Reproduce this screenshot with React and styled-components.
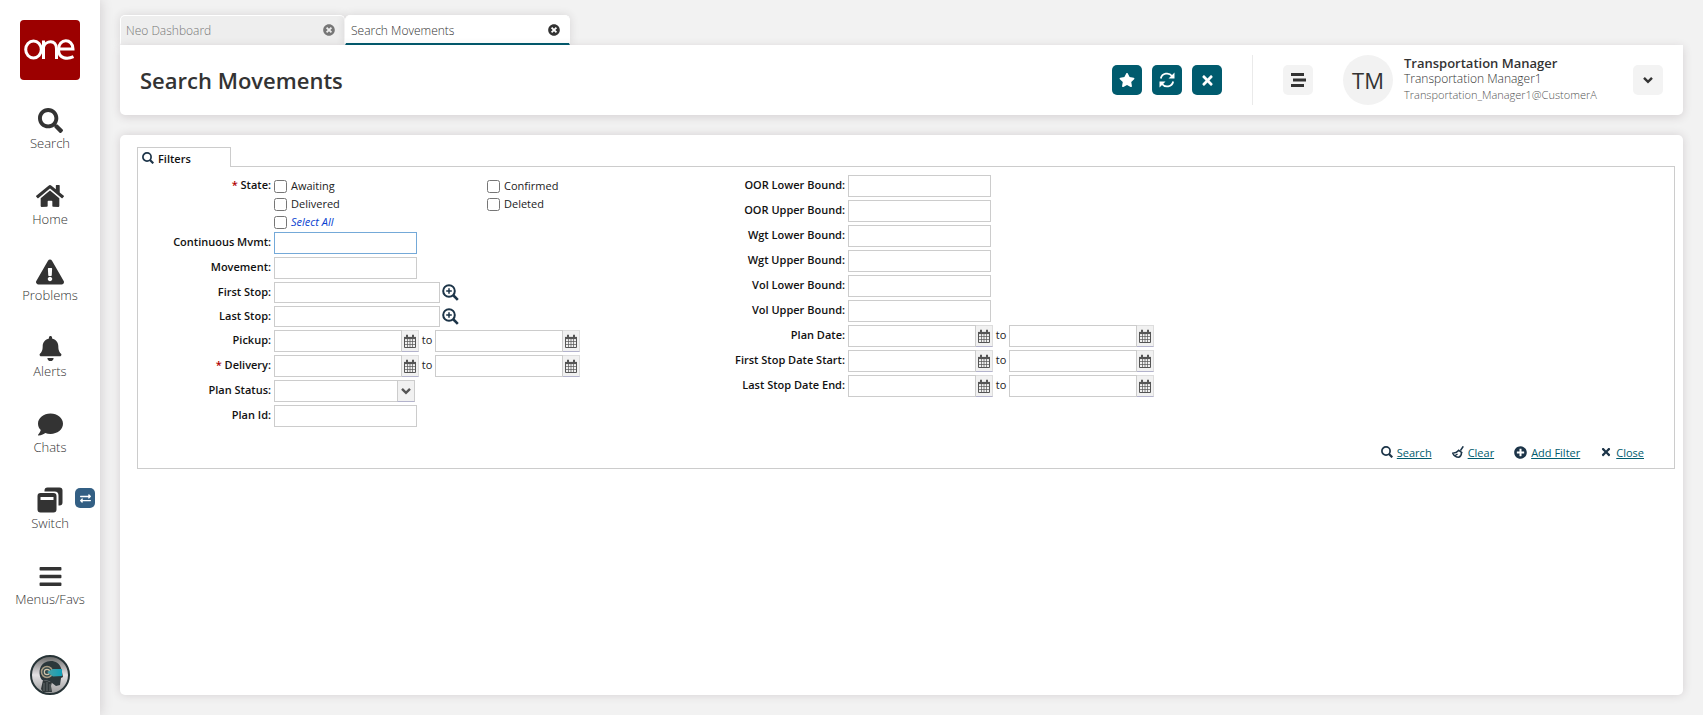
import React, { useState } from 'react'
import styled, { createGlobalStyle } from 'styled-components'
import {
  FaSearch,
  FaHome,
  FaExclamationTriangle,
  FaBell,
  FaComment,
  FaBars,
  FaStar,
  FaTimes,
  FaTimesCircle,
  FaPlusCircle,
  FaExchangeAlt,
} from 'react-icons/fa'

const GlobalStyles = createGlobalStyle`
  * {
    box-sizing: border-box;
  }
  body {
    margin: 0;
    background: #f2f2f2;
    color: #333;
    font-family: 'Open Sans', 'Noto Sans', sans-serif;
    font-size: 11px;
  }
  button, input, select {
    font-family: inherit;
    font-size: inherit;
    color: inherit;
  }
`

const Page = styled.div`
  display: flex;
  min-height: 100vh;
`

const Sidebar = styled.nav`
  display: flex;
  flex-direction: column;
  align-items: center;
  flex: none;
  width: 100px;
  padding: 20px 0;
  background: #fff;
  box-shadow: 0 0 12px rgba(60, 40, 50, 0.2);
`

const NavList = styled.div`
  display: flex;
  flex-direction: column;
  flex: 1;
  width: 100%;
  padding-top: 26px;
  gap: 28px;
`

const NavItem = styled.button`
  position: relative;
  display: flex;
  flex-direction: column;
  align-items: center;
  justify-content: flex-start;
  height: 48px;
  padding: 0;
  border: 0;
  background: none;
  font-size: 13px;
  font-weight: 300;
  line-height: 18px;
  cursor: pointer;
`

const NavIcon = styled.span`
  display: flex;
  align-items: center;
  justify-content: center;
  height: 28px;
`

const SwitchBadge = styled.span`
  position: absolute;
  top: 2px;
  right: 5px;
  display: flex;
  align-items: center;
  justify-content: center;
  width: 20px;
  height: 20px;
  border-radius: 5px;
  background: #335f84;
  color: #fff;
`

const Assistant = styled.button`
  display: flex;
  padding: 0;
  border: 0;
  background: none;
  cursor: pointer;
`

const Main = styled.main`
  display: flex;
  flex-direction: column;
  flex: 1;
  min-width: 0;
  padding: 15px 20px 20px;
`

const Tabs = styled.div`
  display: flex;
`

const Tab = styled.div`
  display: flex;
  align-items: center;
  justify-content: space-between;
  width: 225px;
  height: 30px;
  padding: 0 9px 0 5px;
  border-radius: 5px 5px 0 0;
  border: 1px solid #fff;
  border-bottom: 2px solid ${(p) => (p.$active ? '#005b6e' : '#eee')};
  background: ${(p) => (p.$active ? '#fff' : '#eee')};
  color: ${(p) => (p.$active ? '#333' : '#777')};
  box-shadow: 0 0 10px rgba(60, 40, 50, 0.14);
`

const TabButton = styled.button`
  padding: 2px 0 0;
  border: 0;
  background: none;
  font-size: 12px;
  font-weight: 300;
  cursor: pointer;
`

const TabClose = styled.button`
  display: flex;
  padding: 0;
  border: 0;
  background: none;
  cursor: pointer;
`

const Header = styled.header`
  position: relative;
  display: flex;
  align-items: center;
  height: 70px;
  padding: 0 20px;
  border-radius: 0 0 5px 5px;
  background: #fff;
  box-shadow: 0 2px 10px rgba(60, 40, 50, 0.16);
`

const Title = styled.h1`
  flex: 1;
  margin: 0;
  font-size: 22px;
  font-weight: 600;
`

const Actions = styled.div`
  display: flex;
  align-items: center;
  gap: 10px;
  height: 50px;
  padding-right: 30px;
  border-right: 1px solid #eaeaea;
`

const SquareButton = styled.button`
  display: flex;
  align-items: center;
  justify-content: center;
  width: 30px;
  height: 30px;
  padding: 0;
  border: 0;
  border-radius: 5px;
  background: ${(p) => (p.$primary ? '#005b6e' : '#f3f3f3')};
  color: ${(p) => (p.$primary ? '#fff' : '#333')};
  cursor: pointer;
`

const UserArea = styled.div`
  display: flex;
  align-items: center;
  padding-left: 30px;
`

const Initials = styled.div`
  display: flex;
  align-items: center;
  justify-content: center;
  width: 50px;
  height: 50px;
  margin: 0 11px 0 30px;
  border-radius: 50%;
  background: #f2f2f2;
  font-size: 22px;
`

const UserText = styled.div`
  display: flex;
  flex-direction: column;
  width: 229px;
  padding-bottom: 3px;
  font-size: 12px;
  font-weight: 300;
  line-height: 16px;
`

const UserName = styled.strong`
  font-size: 13px;
  font-weight: 600;
`

const UserLogin = styled.span`
  color: #555;
  font-size: 11px;
`

const Panel = styled.section`
  flex: 1;
  margin-top: 20px;
  padding: 12px 8px 20px 17px;
  border-radius: 5px;
  background: #fff;
  box-shadow: 0 0 10px rgba(60, 40, 50, 0.16);
`

/* sits over the top border of the filter box so the tab looks open */
const FiltersTab = styled.button`
  position: relative;
  display: flex;
  align-items: center;
  gap: 4px;
  width: 94px;
  height: 20px;
  margin-bottom: -1px;
  padding: 1px 4px 0;
  border: 1px solid #ccc;
  border-bottom: 0;
  background: #fff;
  color: #111;
  font-weight: 600;
`

const Filters = styled.form`
  border: 1px solid #ccc;
`

const Columns = styled.div`
  display: grid;
  grid-template-columns: 574px 1fr;
  min-height: 272px;
  padding-top: 8px;
`

const Column = styled.div`
  display: flex;
  flex-direction: column;
  gap: 3px;
`

const FieldRow = styled.div`
  display: flex;
  align-items: flex-start;
  height: ${(p) => (p.$short ? '21px' : '22px')};
`

const Label = styled.label`
  flex: none;
  width: 136px;
  padding-right: 3px;
  color: #111;
  font-weight: 600;
  line-height: 20px;
  text-align: right;
`

const Required = styled.span`
  color: #b00000;
`

const StateRow = styled.div`
  display: flex;
  align-items: flex-start;
`

const StateGrid = styled.div`
  display: grid;
  grid-template-columns: 213px 213px;
  grid-auto-rows: 18px;
`

const CheckLabel = styled.label`
  display: flex;
  align-items: center;
  gap: 4px;
  padding-top: 4px;
  color: ${(p) => (p.$link ? '#0a3fd0' : '#222')};
  font-style: ${(p) => (p.$link ? 'italic' : 'normal')};
  line-height: 14px;
`

const Checkbox = styled.input`
  width: 13px;
  height: 13px;
  margin: 0;
`

const TextInput = styled.input`
  width: ${(p) => p.$width || 143}px;
  height: 100%;
  padding: 0 4px;
  border: 1px solid #ccc;
  border-radius: 0;
  background: #fff;
  outline: none;

  &:focus {
    border-color: #74a9d8;
  }
`

const LookupButton = styled.button`
  display: flex;
  margin-left: 2px;
  padding: 2px 0;
  border: 0;
  background: none;
  cursor: pointer;
`

const PickerButton = styled.button`
  display: flex;
  align-items: center;
  justify-content: center;
  width: 17px;
  height: 100%;
  padding: 0;
  border: 1px solid #ddd;
  border-left: 0;
  border-bottom-color: #b3b3cc;
  background: #f1f1f1;
  cursor: pointer;
`

const To = styled.span`
  width: 16px;
  color: #222;
  line-height: 20px;
  text-align: center;
`

const SelectBox = styled.div`
  display: grid;
  width: 141px;
  height: 100%;
`

const Select = styled.select`
  grid-area: 1 / 1;
  appearance: none;
  border: 1px solid #ccc;
  border-radius: 0;
  background: #fff;
  outline: none;
`

const SelectArrow = styled.span`
  grid-area: 1 / 1;
  justify-self: end;
  display: flex;
  align-items: center;
  justify-content: center;
  width: 18px;
  border: 1px solid #ccc;
  border-bottom-color: #b3b3cc;
  background: #f1f1f1;
  pointer-events: none;
`

const FilterActions = styled.div`
  display: flex;
  justify-content: flex-end;
  gap: 20px;
  padding: 5px 30px 8px 0;
`

const ActionLink = styled.a`
  display: flex;
  align-items: center;
  gap: 4px;
  height: 16px;
  color: #005b6e;
  text-decoration: none;

  span {
    text-decoration: underline;
  }
  svg {
    color: #1c3448;
  }
`

const Logo = () => (
  <svg width="60" height="60" viewBox="0 0 60 60" role="img" aria-label="one">
    <rect width="60" height="60" rx="4" fill="#9c0000" />
    <g fill="none" stroke="#fff" strokeWidth="3">
      <ellipse cx="13.5" cy="29.5" rx="7.8" ry="8.6" />
      <path d="M23.500 39V20.500M23.500 27c2-6.500 13-8 13 2v10" />
      <path d="M39.500 29h13.500c0-11-14.500-11-14.500.5 0 9.500 9 10 15 7.200" />
    </g>
  </svg>
)

const SwitchIcon = () => (
  <svg width="26" height="26" viewBox="0 0 26 26" fill="#333">
    <path d="M7.500 4.500V3.500a3 3 0 0 1 3-3h12a3 3 0 0 1 3 3v12a3 3 0 0 1-3 3h-1V8.500a4 4 0 0 0-4-4z" />
    <path
      fillRule="evenodd"
      d="M3.500 6h13a3 3 0 0 1 3 3v13.500a3 3 0 0 1-3 3h-13a3 3 0 0 1-3-3V9a3 3 0 0 1 3-3zm0 4v3h13v-3z"
    />
  </svg>
)

const RefreshIcon = () => (
  <svg width="16" height="16" viewBox="0 0 16 16" fill="none" stroke="currentColor" strokeWidth="1.800">
    <path d="M1.800 6.500C3 .8 10 .2 13 4M14.200 9.500C13 15.200 6 15.800 3 12" />
    <path d="M15.500.5V6.500H9.500zM.5 15.500V9.500H6.500z" fill="currentColor" stroke="none" />
  </svg>
)

const LinesIcon = () => (
  <svg width="16" height="14" viewBox="0 0 16 14" fill="#333">
    <path d="M1 0h13v3H1zM3 5.500h13v3H3zM1 11h13v3H1z" />
  </svg>
)

const Chevron = ({ size = 10, color = '#333' }) => (
  <svg width={size} height={size} viewBox="0 0 10 10" fill="none" stroke={color} strokeWidth="2.400">
    <path d="M1 2.800 5 6.800l4-4" />
  </svg>
)

const CalendarIcon = () => (
  <svg width="12" height="14" viewBox="0 0 12 14" fill="none" stroke="#555">
    <path d="M.5 3.500v10h11v-10z" strokeWidth="1" />
    <path d="M.5 7.500h11M.5 10.500h11M3.500 5v8.500M6 5v8.500M8.500 5v8.500" strokeWidth=".7" />
    <path d="M0 4h12" strokeWidth="2.200" />
    <path d="M3 .8v3M9 .8v3" strokeWidth="2" />
  </svg>
)

const ZoomIcon = () => (
  <svg width="17" height="17" viewBox="0 0 17 17" fill="none" stroke="#1c3448">
    <circle cx="7" cy="7" r="5.800" strokeWidth="2" />
    <path d="M7 4.200v5.600M4.200 7h5.600" strokeWidth="1.500" />
    <path d="m11 11 4.800 4.800" strokeWidth="2.600" />
  </svg>
)

const SearchIcon = () => (
  <svg width="12" height="12" viewBox="0 0 12 12" fill="none" stroke="#1c3448">
    <circle cx="5" cy="5" r="4.100" strokeWidth="1.700" />
    <path d="m8 8 3.300 3.300" strokeWidth="2.200" />
  </svg>
)

const BroomIcon = () => (
  <svg width="12" height="12" viewBox="0 0 12 12" fill="none" stroke="#1c3448" strokeWidth="1.500">
    <path d="M11.300.3 8.500 4.500M6 3.800l4.300 3M6.300 4.800C5 6.500 3 7.200.8 7.200c1 2.500 3 4 6 4 2-.8 2.700-2.500 2.700-4.500M3.300 9.500 5.500 8" />
  </svg>
)

const RobotAvatar = () => (
  <svg width="40" height="40" viewBox="0 0 40 40">
    <defs>
      <linearGradient id="robotBg" x1="0" y1="0" x2="0" y2="1">
        <stop offset="0" stopColor="#666" />
        <stop offset=".5" stopColor="#e4e2e4" />
        <stop offset="1" stopColor="#999" />
      </linearGradient>
      <linearGradient id="visor">
        <stop offset="0" stopColor="#4a9fa6" />
        <stop offset="1" stopColor="#109fb8" />
      </linearGradient>
    </defs>
    <circle cx="20" cy="20" r="19" fill="url(#robotBg)" stroke="#263336" strokeWidth="2" />
    <path
      d="M12 25C8 20 9 11 14 8c6-4 15-2 17 5l1 4 1 5-2 1-1 7-4 1-4-3-3-2z"
      fill="#2b373b"
    />
    <path d="M13 25l9 2-1 4 1 6h-9l-2-3z" fill="#30383a" />
    <circle cx="17" cy="17" r="5.500" fill="#33474a" stroke="#a89b83" strokeWidth="1.500" />
    <circle cx="17" cy="17" r="2.700" fill="none" stroke="#d0c5aa" strokeWidth="1.200" />
    <path d="M17 17l6-3h9v7l-9 .5z" fill="url(#visor)" />
    <path d="M14 28v8M17 27v9M20 29v7" stroke="#71797a" strokeWidth=".8" />
  </svg>
)

const navItems = [
  { label: 'Search', icon: <FaSearch size={25} /> },
  { label: 'Home', icon: <FaHome size={28} /> },
  { label: 'Problems', icon: <FaExclamationTriangle size={28} /> },
  { label: 'Alerts', icon: <FaBell size={25} /> },
  { label: 'Chats', icon: <FaComment size={25} /> },
  { label: 'Switch', icon: <SwitchIcon />, badge: true },
  { label: 'Menus/Favs', icon: <FaBars size={25} /> },
]

const leftFields = [
  { label: 'Continuous Mvmt', type: 'text', focus: true },
  { label: 'Movement', type: 'text' },
  { label: 'First Stop', type: 'lookup' },
  { label: 'Last Stop', type: 'lookup' },
  { label: 'Pickup', type: 'dates' },
  { label: 'Delivery', type: 'dates', required: true },
  { label: 'Plan Status', type: 'select' },
  { label: 'Plan Id', type: 'text' },
]

const rightFields = [
  { label: 'OOR Lower Bound', type: 'text' },
  { label: 'OOR Upper Bound', type: 'text' },
  { label: 'Wgt Lower Bound', type: 'text' },
  { label: 'Wgt Upper Bound', type: 'text' },
  { label: 'Vol Lower Bound', type: 'text' },
  { label: 'Vol Upper Bound', type: 'text' },
  { label: 'Plan Date', type: 'dates' },
  { label: 'First Stop Date Start', type: 'dates' },
  { label: 'Last Stop Date End', type: 'dates' },
]

const states = ['Awaiting', 'Confirmed', 'Delivered', 'Deleted']

const DateInput = ({ id, label }) => (
  <>
    <TextInput id={id} type="text" aria-label={label} $width={128} />
    <PickerButton type="button" aria-label="Open calendar">
      <CalendarIcon />
    </PickerButton>
  </>
)

function Field({ label, type, required, focus }) {
  const id = label.toLowerCase().replace(/ /g, '-')

  return (
    <FieldRow $short={type === 'lookup'}>
      <Label htmlFor={id}>
        {required && <Required>* </Required>}
        {label}:
      </Label>
      {type === 'text' && <TextInput id={id} type="text" autoFocus={focus} />}
      {type === 'lookup' && (
        <>
          <TextInput id={id} type="text" $width={166} />
          <LookupButton type="button" aria-label={`Find ${label}`}>
            <ZoomIcon />
          </LookupButton>
        </>
      )}
      {type === 'dates' && (
        <>
          <DateInput id={id} />
          <To>to</To>
          <DateInput id={`${id}-to`} label={`${label} to`} />
        </>
      )}
      {type === 'select' && (
        <SelectBox>
          <Select id={id}>
            <option></option>
          </Select>
          <SelectArrow>
            <Chevron color="#555" />
          </SelectArrow>
        </SelectBox>
      )}
    </FieldRow>
  )
}

function App() {
  const [checked, setChecked] = useState([])

  const toggleState = (state) => {
    setChecked(checked.includes(state) ? checked.filter((s) => s !== state) : [...checked, state])
  }

  const toggleAll = (e) => {
    setChecked(e.target.checked ? states : [])
  }

  return (
    <Page>
      <GlobalStyles />
      <Sidebar>
        <Logo />
        <NavList>
          {navItems.map((item) => (
            <NavItem key={item.label} type="button">
              <NavIcon>{item.icon}</NavIcon>
              {item.label}
              {item.badge && (
                <SwitchBadge>
                  <FaExchangeAlt size={11} />
                </SwitchBadge>
              )}
            </NavItem>
          ))}
        </NavList>
        <Assistant type="button" aria-label="Assistant">
          <RobotAvatar />
        </Assistant>
      </Sidebar>

      <Main>
        <Tabs>
          <Tab>
            <TabButton type="button">Neo Dashboard</TabButton>
            <TabClose type="button" aria-label="Close Neo Dashboard">
              <FaTimesCircle size={12} />
            </TabClose>
          </Tab>
          <Tab $active>
            <TabButton type="button">Search Movements</TabButton>
            <TabClose type="button" aria-label="Close Search Movements">
              <FaTimesCircle size={12} />
            </TabClose>
          </Tab>
        </Tabs>

        <Header>
          <Title>Search Movements</Title>
          <Actions>
            <SquareButton $primary type="button" aria-label="Favorite">
              <FaStar size={16} />
            </SquareButton>
            <SquareButton $primary type="button" aria-label="Refresh">
              <RefreshIcon />
            </SquareButton>
            <SquareButton $primary type="button" aria-label="Close">
              <FaTimes size={15} />
            </SquareButton>
          </Actions>
          <UserArea>
            <SquareButton type="button" aria-label="Menu">
              <LinesIcon />
            </SquareButton>
            <Initials>TM</Initials>
            <UserText>
              <UserName>Transportation Manager</UserName>
              <span>Transportation Manager1</span>
              <UserLogin>Transportation_Manager1@CustomerA</UserLogin>
            </UserText>
            <SquareButton type="button" aria-label="User menu">
              <Chevron />
            </SquareButton>
          </UserArea>
        </Header>

        <Panel>
          <FiltersTab type="button">
            <SearchIcon />
            Filters
          </FiltersTab>
          <Filters onSubmit={(e) => e.preventDefault()}>
            <Columns>
              <Column>
                <StateRow role="group" aria-labelledby="state-label">
                  <Label as="span" id="state-label">
                    <Required>* </Required>State:
                  </Label>
                  <StateGrid>
                    {states.map((state) => (
                      <CheckLabel key={state}>
                        <Checkbox
                          type="checkbox"
                          checked={checked.includes(state)}
                          onChange={() => toggleState(state)}
                        />
                        {state}
                      </CheckLabel>
                    ))}
                    <CheckLabel $link>
                      <Checkbox
                        type="checkbox"
                        checked={checked.length === states.length}
                        onChange={toggleAll}
                      />
                      Select All
                    </CheckLabel>
                  </StateGrid>
                </StateRow>
                {leftFields.map((field) => (
                  <Field key={field.label} {...field} />
                ))}
              </Column>
              <Column>
                {rightFields.map((field) => (
                  <Field key={field.label} {...field} />
                ))}
              </Column>
            </Columns>
            <FilterActions>
              <ActionLink href="#search">
                <SearchIcon />
                <span>Search</span>
              </ActionLink>
              <ActionLink href="#clear">
                <BroomIcon />
                <span>Clear</span>
              </ActionLink>
              <ActionLink href="#add-filter">
                <FaPlusCircle size={13} />
                <span>Add Filter</span>
              </ActionLink>
              <ActionLink href="#close">
                <FaTimes size={12} />
                <span>Close</span>
              </ActionLink>
            </FilterActions>
          </Filters>
        </Panel>
      </Main>
    </Page>
  )
}

export default App
